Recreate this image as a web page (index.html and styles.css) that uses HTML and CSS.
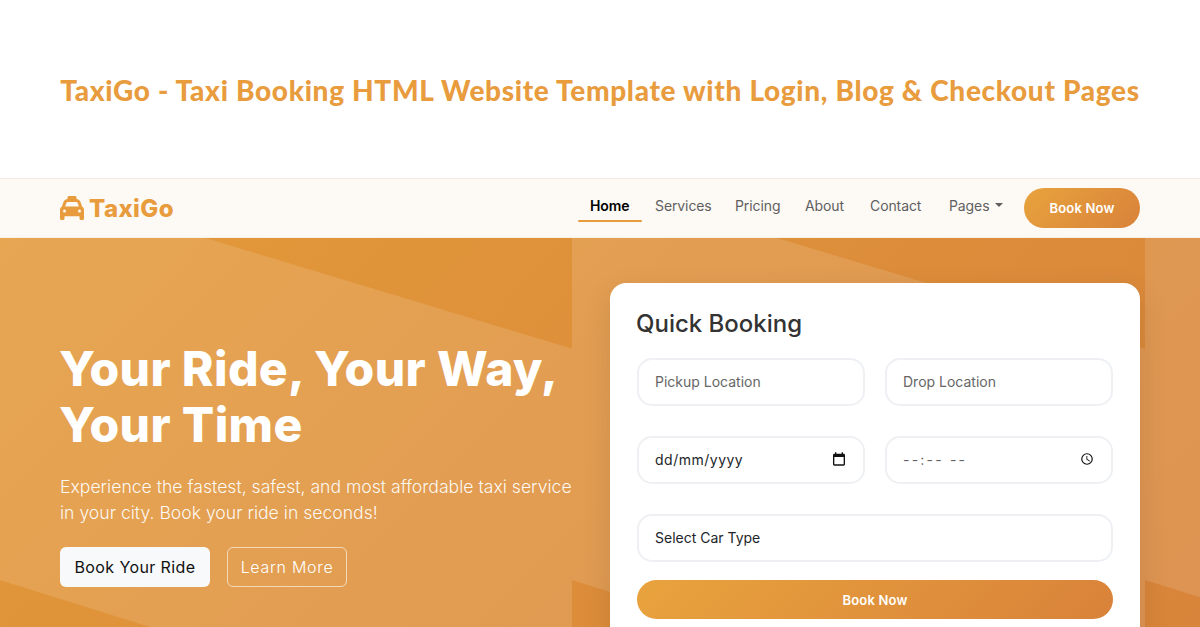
FILE: index.html
```html
<!DOCTYPE html>
<html lang="en">
<head>
<meta charset="utf-8">
<title>TaxiGo</title>
<link rel="stylesheet" href="styles.css">
</head>
<body>
<header class="banner"><h2 class="banner-title">TaxiGo - Taxi Booking HTML Website Template with Login, Blog &amp; Checkout Pages</h2></header>
<nav class="nav">
  <a class="brand" href="#">
    <svg class="brand-icon" viewBox="0 0 512 512"><path d="M192 0c-17.7 0-32 14.3-32 32V64c0 .1 0 .1 0 .2c-38.6 2.2-72.3 27.3-85.2 64.1L39.6 228.8C16.4 238.4 0 261.3 0 288V432v48c0 17.7 14.3 32 32 32H64c17.7 0 32-14.3 32-32V432H416v48c0 17.7 14.3 32 32 32h32c17.7 0 32-14.3 32-32V432 288c0-26.7-16.4-49.6-39.6-59.2L437.2 128.3c-12.9-36.8-46.6-61.9-85.2-64.1c0-.1 0-.1 0-.2V32c0-17.7-14.3-32-32-32H192zM165.4 128H346.6c13.6 0 25.7 8.6 30.2 21.4L402.9 224H109.1l26.1-74.6c4.5-12.8 16.6-21.4 30.2-21.4zM96 288a32 32 0 1 1 0 64 32 32 0 1 1 0-64zm288 32a32 32 0 1 1 64 0 32 32 0 1 1 -64 0z"/></svg>
    <span>TaxiGo</span>
  </a>
  <div class="nav-right">
    <div class="links">
      <a class="link active" href="#">Home</a>
      <a class="link" href="#">Services</a>
      <a class="link" href="#">Pricing</a>
      <a class="link" href="#">About</a>
      <a class="link" href="#">Contact</a>
      <a class="link" href="#">Pages<i class="caret"></i></a>
    </div>
    <a class="nav-cta" href="#">Book Now</a>
  </div>
</nav>
<main class="hero">
  <section class="intro">
    <h1>Your Ride, Your Way,<br>Your Time</h1>
    <p>Experience the fastest, safest, and most affordable taxi service<br>in your city. Book your ride in seconds!</p>
    <div class="actions">
      <a class="btn btn-light" href="#">Book Your Ride</a>
      <a class="btn btn-outline" href="#">Learn More</a>
    </div>
  </section>
  <section class="card">
    <h3>Quick Booking</h3>
    <div class="form">
      <div class="field muted">Pickup Location</div>
      <div class="field muted">Drop Location</div>
      <div class="field"><span class="date">dd/mm/yyyy</span>
        <svg class="field-icon" viewBox="0 0 24 24"><path d="M19 4h-1V2h-2v2H8V2H6v2H5c-1.1 0-2 .9-2 2v14c0 1.1.9 2 2 2h14c1.1 0 2-.9 2-2V6c0-1.1-.9-2-2-2zm0 16H5V9h14v11z"/></svg>
      </div>
      <div class="field muted"><span class="time">--:-- --</span>
        <svg class="field-icon clock" viewBox="0 0 24 24"><path d="M12 2a10 10 0 1 0 0 20 10 10 0 0 0 0-20zm0 18a8 8 0 1 1 0-16 8 8 0 0 1 0 16zm.5-13H11v6l5.2 3.1.8-1.2-4.5-2.7V7z"/></svg>
      </div>
      <div class="field wide">Select Car Type</div>
      <a class="submit" href="#">Book Now</a>
    </div>
  </section>
</main>
</body>
</html>
```

FILE: styles.css
```css
* { box-sizing: border-box; }
html, body { margin: 0; height: 627px; overflow: hidden; background: #fff; }
body { font-family: Inter, "Noto Sans", sans-serif; color: #212529; }
a { text-decoration: none; color: inherit; }

.banner { height: 178px; display: flex; justify-content: center; padding-top: 70px; }
.banner-title { margin: 0; font: 900 28px/40px Lato, sans-serif; color: #e89c3d; white-space: nowrap; letter-spacing: 0.67px; }

.nav { height: 60px; display: flex; align-items: center; justify-content: space-between; padding: 0 60px; background: #fdf9f5; border-top: 1px solid #f6e9e0; border-bottom: 1px solid #f8efe6; }
.brand { display: flex; align-items: center; gap: 5px; font-size: 24px; font-weight: 800; color: #e89c3d; letter-spacing: 0.4px; }
.brand-icon { width: 24px; height: 24px; fill: #e89c3d; }
.nav-right { display: flex; align-items: center; height: 100%; }
.links { display: grid; grid-template-columns: 65px 80px 70px 65px 79px 87px; }
.link { display: flex; align-items: center; height: 34px; padding-left: 12px; font-size: 14px; letter-spacing: -0.1px; color: #5f5f5f; position: relative; top: -3px; }
.link.active { color: #000; font-weight: 600; }
.link.active::after { content: ""; position: absolute; left: 0; right: 1px; bottom: 0; height: 2px; border-radius: 1px; background: #e89c3d; }
.caret { display: inline-block; margin-left: 6px; border: 4px solid transparent; border-top-color: #5f5f5f; border-bottom: 0; }
.nav-cta { width: 116px; height: 40px; border-radius: 20px; display: flex; align-items: center; justify-content: center; font-size: 13px; font-weight: 600; letter-spacing: 0.2px; color: #fff; background: linear-gradient(135deg, #e8a33d, #d9823a); }

.hero { height: 389px; padding: 0 60px; display: grid; grid-template-columns: 550px 530px; overflow: hidden;
  background:
    url("data:image/svg+xml,%3Csvg xmlns='http://www.w3.org/2000/svg' width='572.5' height='389'%3E%3Cpath fill='%23fff' fill-opacity='.12' d='M0 0H205L572.5 111V389H150L0 342Z'/%3E%3C/svg%3E") 0 0 repeat-x,
    linear-gradient(135deg, #e39a3a, #d8843a); }
.intro { padding-top: 103px; color: #fff; }
.intro h1 { margin: 0 0 0 -1px; font-size: 48px; line-height: 56px; font-weight: 800; white-space: nowrap; letter-spacing: 0.35px; }
.intro p { margin: 21px 0 0; font-size: 17.6px; line-height: 26.4px; font-weight: 300; white-space: nowrap; color: rgba(255,255,255,.95); }
.actions { display: flex; gap: 17px; margin-top: 20px; }
.btn { height: 40px; display: flex; align-items: center; justify-content: center; border-radius: 6px; font-size: 16px; }
.btn-light { width: 150px; background: #f8f9fa; color: #111; letter-spacing: 0.4px; }
.btn-outline { width: 120px; border: 1px solid rgba(255,255,255,.6); color: #fff; font-weight: 300; letter-spacing: 0.7px; }

.card { margin-top: 45px; height: 400px; padding: 22px 27px 0 27px; background: #fff; border-radius: 16px; box-shadow: 0 10px 30px rgba(0,0,0,.1); }
.card h3 { margin: 0 0 0 -1px; font-size: 24px; line-height: 38px; font-weight: 500; color: #333; }
.form { margin-top: 15px; display: grid; grid-template-columns: 228px 228px; column-gap: 20px; row-gap: 30px; }
.field { height: 48px; padding: 0 16px 2px; display: flex; align-items: center; justify-content: space-between; border: 2px solid #eef0f3; border-radius: 15px; background: #fff; font-size: 14px; color: #212529; }
.field.muted { color: #666; }
.field.wide { grid-column: 1 / -1; }
.date { letter-spacing: 0.5px; }
.time { letter-spacing: 2.2px; }
.field-icon { width: 16px; height: 16px; fill: #111; }
.clock { width: 14px; height: 14px; margin-right: 1px; }
.submit { grid-column: 1 / -1; margin-top: -12px; height: 39px; border-radius: 20px; display: flex; align-items: center; justify-content: center; font-size: 13px; font-weight: 600; letter-spacing: 0.2px; color: #fff; background: linear-gradient(135deg, #e8a33d, #d9823a); }
```
